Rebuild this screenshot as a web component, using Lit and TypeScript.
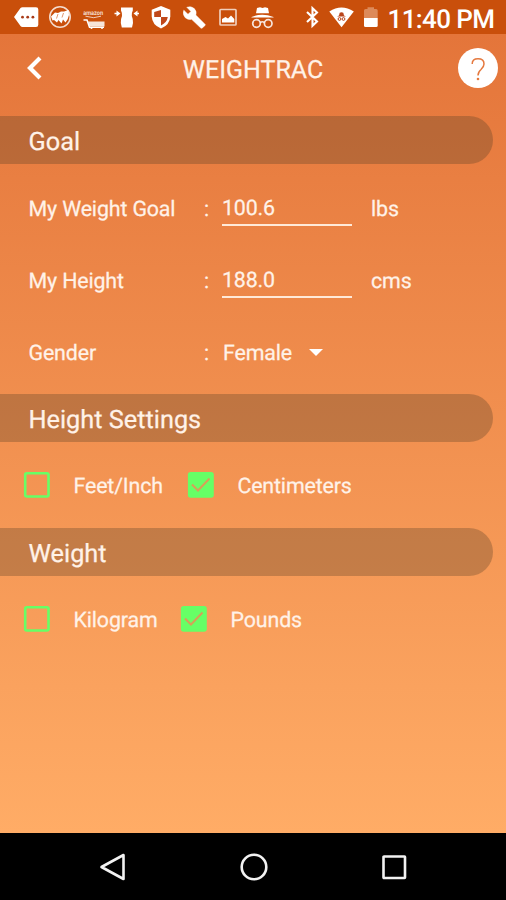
import { LitElement, html, css, svg, nothing, TemplateResult } from "lit";
import { customElement, property } from "lit/decorators.js";

type Glyph = { gap: number; x: number; w: number; art: TemplateResult };

// Status glyphs share one 34px tall coordinate space; each one shows its own horizontal slice.
const statusGlyphs: Glyph[] = [
  { gap: 14, x: 14, w: 25, art: svg`<path d="M14 17 L20.5 8 Q21.200 7.200 22.500 7.200 H36 Q38.300 7.200 38.300 9.500 V24.700 Q38.300 27 36 27 H22.500 Q21.200 27 20.500 26 Z" fill="#fff"/><g fill="#a83a18"><circle cx="22.500" cy="17.200" r="1.400"/><circle cx="27.700" cy="17.200" r="1.400"/><circle cx="32.900" cy="17.200" r="1.400"/></g>` },
  { gap: 9, x: 48, w: 24, art: svg`<circle cx="60" cy="17" r="10.200" fill="none" stroke="#fff" stroke-opacity=".8" stroke-width="1.600"/><path d="M51 16.500 L55 12.500 L58 13 L61 11.500 L64 11.500 L68.500 10 L69 15 Q68 20 65.500 22.500 L63 19.500 L61.500 23.500 L58.500 20 L57 22.500 L54 20 L52.500 20.500 Z" fill="#fff"/><path d="M58 14 L56.500 18.500 M63.500 13 L62 17.500" stroke="#c94f0b" stroke-width=".6"/>` },
  { gap: 11, x: 83, w: 22, art: svg`<text x="83.200" y="15" font-family="Roboto, sans-serif" font-size="6.500" font-weight="700" textLength="20" lengthAdjust="spacingAndGlyphs" fill="#fff" fill-opacity=".8">amazon</text><path d="M85.500 16.200 Q94 19.200 101 16.200" fill="none" stroke="#fff" stroke-opacity=".7" stroke-width="1"/><path d="M83.500 20 H87 L89.500 27.300 H104" fill="none" stroke="#fff" stroke-width="1.500"/><path d="M88 21.500 H104.500 V26.500 H89.500 Z" fill="#fff" fill-opacity=".85"/><circle cx="91.500" cy="28" r="1" fill="#fff"/><circle cx="102" cy="28" r="1" fill="#fff"/>` },
  { gap: 9, x: 114, w: 25, art: svg`<path d="M121 7.500 H132.800 V10.500 Q131.300 13.500 131.800 16 Q133.200 19 133 23 L132 27.500 H121.800 L120.800 23 Q120.600 19 122 16 Q122.500 13.500 121 10.500 Z" fill="#fff"/><path d="M114.500 13.500 H117 M139 13.500 H136.500" stroke="#fff" stroke-width="1.600"/><path d="M120.500 13.500 L116.500 10.500 V16.500 Z M133.500 13.500 L137.500 10.500 V16.500 Z" fill="#fff"/>` },
  { gap: 12, x: 151, w: 20, art: svg`<path d="M161 6 L170.300 9.800 V16.500 Q169.800 25 161 28.500 Q152.200 25 151.700 16.500 V9.800 Z" fill="#fff"/><path d="M161 10 V17 H154.200 V12 Z M161 17 H167.800 Q167 22.500 161 25.500 Z" fill="#c0481a"/>` },
  { gap: 12, x: 183, w: 23, art: svg`<path d="M205 24.300 L195.800 15.100 Q197 11.600 194.300 8.600 Q191 5.500 186.800 7.300 L190.900 11.400 L188 14.300 L183.800 10.200 Q182.200 14.500 185.100 17.600 Q188.200 20.400 191.600 19.300 L200.800 28 Q201.500 28.500 202.300 27.900 L205 25.500 Q205.600 24.900 205 24.300 Z" fill="#fff" stroke="#fff" stroke-width=".5"/>` },
  { gap: 13, x: 219, w: 18, art: svg`<rect x="220" y="9.500" width="16" height="15.500" rx=".8" fill="none" stroke="#fff" stroke-opacity=".72" stroke-width="1.700"/><path d="M222 22.500 V19 L225.500 17 L228 18.500 L231 15.500 L234.300 19 V22.500 Z" fill="#fff"/>` },
  { gap: 14, x: 251, w: 23, art: svg`<path d="M257 8 L260 7.300 L262.500 8 L265 7.300 L268 8 L269 13.200 H256 Z" fill="#fff"/><path d="M251.500 17 Q262 12.500 273.500 17 V17.500 H251.500 Z" fill="#fff"/><g fill="none" stroke="#fff" stroke-opacity=".85" stroke-width="1.700"><circle cx="256.500" cy="23.500" r="3.800"/><circle cx="268.200" cy="23.500" r="3.800"/><path d="M260.300 22.500 Q262.400 21 264.400 22.500"/></g>` },
  { gap: 32, x: 306, w: 13, art: svg`<path d="M307 12 L317 21.500 L312.500 25.800 V8.200 L317 12.500 L307 22" fill="none" stroke="#fff" stroke-width="2.100"/>` },
  { gap: 10, x: 329, w: 25, art: svg`<path d="M329.300 11.500 Q341.500 3.500 353.800 11.500 L341.500 27.300 Z" fill="#fff"/><path d="M339 15.500 L339.700 12.800 L341.500 12.200 L343.300 12.800 L344 15.500 L346 16.500 H337 Z" fill="#b9441a"/><circle cx="339.500" cy="19" r="1.400" fill="none" stroke="#b9441a"/><circle cx="343.500" cy="19" r="1.400" fill="none" stroke="#b9441a"/>` },
  { gap: 9, x: 363, w: 16, art: svg`<path d="M364 18 V10.500 Q364 9 365.500 9 H367.500 V7.300 H374 V9 H376.200 Q377.700 9 377.700 10.500 V18 Z" fill="#dd8a5a"/><path d="M364 18 H377.700 V25.500 Q377.700 27 376.200 27 H365.500 Q364 27 364 25.500 Z" fill="#fff"/>` },
];

@customElement("status-bar")
class StatusBar extends LitElement {
  static styles = css`
    :host { display: flex; height: 34px; background: #c94f0b; color: #fff; }
    svg { display: block; flex: none; height: 34px; }
    .time { margin-left: 8.500px; font: 500 26px/40px Roboto, sans-serif; letter-spacing: -0.6px; white-space: nowrap; }
  `;
  render() {
    return html`${statusGlyphs.map(
      (g) => html`<svg style="margin-left:${g.gap}px" width=${g.w} viewBox="${g.x} 0 ${g.w} 34">${g.art}</svg>`
    )}<span class="time">11:40 PM</span>`;
  }
}

@customElement("section-title")
class SectionTitle extends LitElement {
  static styles = css`
    :host {
      display: block; box-sizing: border-box; height: 48px; margin-right: 13px; padding-left: 28.5px;
      border-radius: 0 24px 24px 0; background: rgba(78, 60, 38, 0.3);
      font-size: 25.300px; line-height: 54px; letter-spacing: 0;
    }
  `;
  render() {
    return html`<slot></slot>`;
  }
}

@customElement("check-option")
class CheckOption extends LitElement {
  @property({ type: Boolean }) checked = false;
  static styles = css`
    :host { display: flex; align-items: center; }
    svg { display: block; margin-right: 22.500px; }
    span { padding-top: 3px; }
  `;
  render() {
    return html`<svg width="28" height="28" viewBox="0 0 28 28">
        <rect x="2.200" y="2.200" width="23.300" height="23.300" rx="1.500" fill=${this.checked ? "#66ff66" : "none"} stroke="#66ff66" stroke-width="2.600"/>
        ${this.checked ? svg`<path d="M5 13.500 L11 19.500 L22.500 7.500" fill="none" stroke="#d7a058" stroke-width="2"/>` : nothing}
      </svg><span><slot></slot></span>`;
  }
}

@customElement("app-root")
class AppRoot extends LitElement {
  static styles = css`
    :host {
      display: flex; flex-direction: column; width: 506px; height: 900px; overflow: hidden;
      background: #000; color: #fff2e8; font-family: Roboto, sans-serif;
      text-rendering: geometricPrecision;
    }
    .screen {
      height: 799px; display: flex; flex-direction: column;
      background: linear-gradient(#e4753a, #ffac66); font-size: 21.400px; letter-spacing: -0.150px;
      -webkit-text-stroke: 0.250px #fff2e8;
    }
    header { display: grid; grid-template-columns: 69px 1fr 69px; align-items: center; height: 68px; margin-bottom: 14px; }
    .back { display: block; margin-left: 26px; }
    h1 { margin: 0; padding-top: 5px; font: 400 25px/30px Roboto, sans-serif; text-align: center; letter-spacing: 0; }
    .help {
      justify-self: end; margin-right: 8px; width: 40px; height: 40px; border-radius: 50%; background: #fff;
    }
    .fields { padding-top: 9px; height: 230px; box-sizing: border-box; }
    .row {
      display: grid; grid-template-columns: 175.500px 18px 130px 1fr; height: 72px;
      padding-left: 28.500px; line-height: 74px;
    }
    .entry { display: flex; flex-direction: column; line-height: 30px; padding-top: 21px; }
    .entry::after { content: ""; height: 2px; background: #ffe9d8; }
    .unit { padding-left: 19px; }
    .select { display: flex; align-items: center; padding-left: 1px; }
    .arrow { margin: -4px 0 0 17px; }
    .options { display: flex; align-items: center; height: 86px; padding-left: 23px; gap: 24px; }
    .weights { gap: 22.500px; }
    nav { flex: 1; display: flex; align-items: center; justify-content: center; gap: 112.500px; padding-left: 1px; }
    nav svg { display: block; }
  `;
  render() {
    return html`
      <status-bar></status-bar>
      <div class="screen">
        <header>
          <svg class="back" width="18" height="26" viewBox="0 0 18 26"><path d="M14 3 L4 13 L14 23" fill="none" stroke="#fff" stroke-width="4.200"/></svg>
          <h1>WEIGHTRAC</h1>
          <svg class="help" viewBox="0 0 40 40"><path d="M14.200 16 Q14.200 10.800 20 10.800 Q26 10.800 26 16 Q26 18.800 23 21.500 Q20 24 20 27.500" fill="none" stroke="#e5793f" stroke-width="1.500"/><circle cx="20" cy="31" r="1.300" fill="#e5793f"/></svg>
        </header>
        <section-title>Goal</section-title>
        <div class="fields">
          <div class="row"><span>My Weight Goal</span><span>:</span><span class="entry">100.6</span><span class="unit">lbs</span></div>
          <div class="row"><span>My Height</span><span>:</span><span class="entry">188.0</span><span class="unit">cms</span></div>
          <div class="row"><span>Gender</span><span>:</span><span class="select">Female<svg class="arrow" width="14" height="7" viewBox="0 0 14 7"><path d="M0 0 H14 L7 7 Z" fill="#fff"/></svg></span></div>
        </div>
        <section-title>Height Settings</section-title>
        <div class="options">
          <check-option>Feet/Inch</check-option>
          <check-option checked>Centimeters</check-option>
        </div>
        <section-title>Weight</section-title>
        <div class="options weights">
          <check-option>Kilogram</check-option>
          <check-option checked>Pounds</check-option>
        </div>
      </div>
      <nav>
        <svg width="28" height="28" viewBox="0 0 28 28"><path d="M24.500 2 V26 L2.500 14 Z" fill="none" stroke="#f2f2f2" stroke-width="2.600" stroke-linejoin="round"/></svg>
        <svg width="28" height="28" viewBox="0 0 28 28"><circle cx="14" cy="14" r="12.300" fill="none" stroke="#f2f2f2" stroke-width="2.600"/></svg>
        <svg width="28" height="28" viewBox="0 0 28 28"><rect x="3.500" y="3.500" width="21.500" height="21.500" rx=".5" fill="none" stroke="#f2f2f2" stroke-width="2.600"/></svg>
      </nav>
    `;
  }
}
